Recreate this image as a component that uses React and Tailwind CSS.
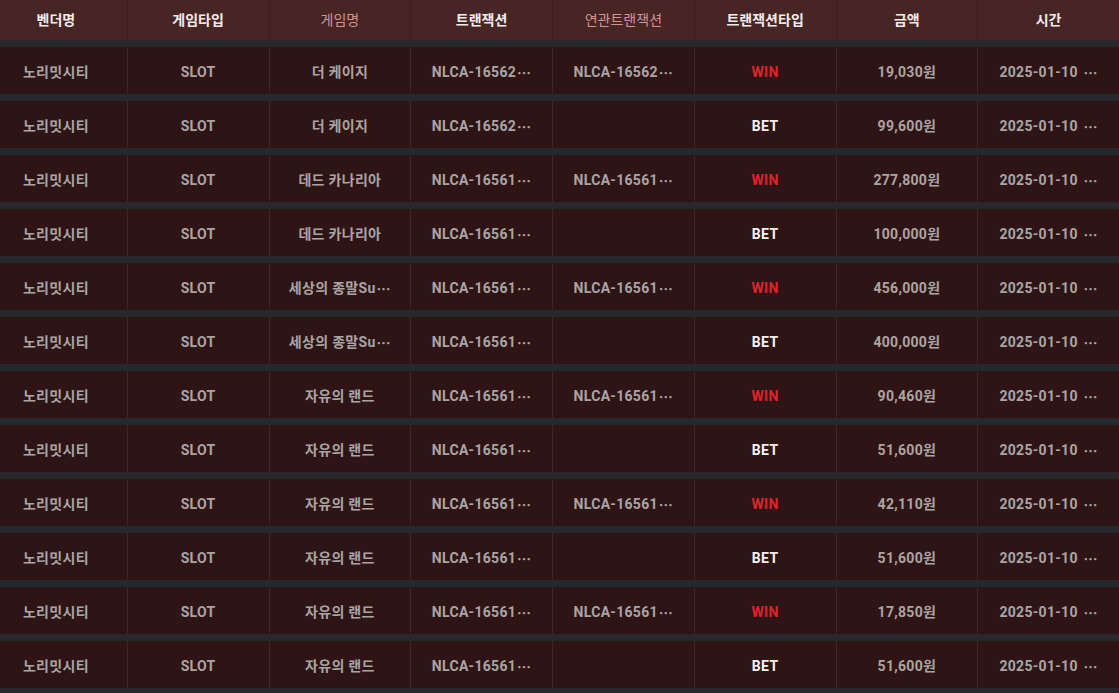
import React from 'react';

const headers = [
  { label: '벤더명' },
  { label: '게임타입' },
  { label: '게임명', muted: true },
  { label: '트랜잭션' },
  { label: '연관트랜잭션', muted: true },
  { label: '트랜잭션타입' },
  { label: '금액' },
  { label: '시간' },
];

const rows = [
  ['더 케이지', 'NLCA-16562…', 'NLCA-16562…', 'WIN', '19,030원'],
  ['더 케이지', 'NLCA-16562…', '', 'BET', '99,600원'],
  ['데드 카나리아', 'NLCA-16561…', 'NLCA-16561…', 'WIN', '277,800원'],
  ['데드 카나리아', 'NLCA-16561…', '', 'BET', '100,000원'],
  ['세상의 종말Su…', 'NLCA-16561…', 'NLCA-16561…', 'WIN', '456,000원'],
  ['세상의 종말Su…', 'NLCA-16561…', '', 'BET', '400,000원'],
  ['자유의 랜드', 'NLCA-16561…', 'NLCA-16561…', 'WIN', '90,460원'],
  ['자유의 랜드', 'NLCA-16561…', '', 'BET', '51,600원'],
  ['자유의 랜드', 'NLCA-16561…', 'NLCA-16561…', 'WIN', '42,110원'],
  ['자유의 랜드', 'NLCA-16561…', '', 'BET', '51,600원'],
  ['자유의 랜드', 'NLCA-16561…', 'NLCA-16561…', 'WIN', '17,850원'],
  ['자유의 랜드', 'NLCA-16561…', '', 'BET', '51,600원'],
];

const font = { fontFamily: 'Roboto, "Noto Sans CJK KR", sans-serif' };

// truncated values end in a centred CJK ellipsis, like the source table
const Clip = ({ text }) => {
  if (!text.endsWith('…')) return text;
  return (
    <>
      {text.slice(0, -1)}
      <span className="font-['Noto_Sans_CJK_KR'] leading-none ml-[1px]">…</span>
    </>
  );
};

const Cell = ({ children, first, className = '' }) => (
  <div
    className={`flex items-center justify-center pt-[3px] text-[14px] font-bold tracking-[0.3px] whitespace-nowrap overflow-hidden ${
      first ? '' : 'border-l border-[#40262a]'
    } ${className}`}
  >
    {children}
  </div>
);

export default function App() {
  return (
    <div className="w-[1119px] h-[693px] overflow-hidden bg-[#25292d]" style={font}>
      <div className="w-[1134px] -ml-[15px] flex flex-col gap-[7px]">
        {/* Header */}
        <div className="grid grid-cols-8 h-[40px] bg-[#482525]">
          {headers.map((h, i) => (
            <div
              key={h.label}
              className={`flex items-center justify-center text-[14px] ${
                i === 0 ? '' : 'border-l border-[#3a1e1e]'
              } ${h.muted ? 'text-[#d3938f] font-normal' : 'text-[#f0ecec] font-bold'}`}
            >
              {h.label}
            </div>
          ))}
        </div>

        {/* Rows */}
        {rows.map((r, i) => (
          <div key={i} className="grid grid-cols-8 h-[47px] bg-[#2f1415] text-[#a9a5a5]">
            <Cell first>노리밋시티</Cell>
            <Cell>SLOT</Cell>
            <Cell><Clip text={r[0]} /></Cell>
            <Cell><Clip text={r[1]} /></Cell>
            <Cell><Clip text={r[2]} /></Cell>
            <Cell className={r[3] === 'WIN' ? 'text-[#e0232b]' : 'text-[#f4f1f1]'}>{r[3]}</Cell>
            <Cell>{r[4]}</Cell>
            <Cell>
              {'2025-01-10\u00a0'}
              <span className="font-['Noto_Sans_CJK_KR'] leading-none ml-[2px]">…</span>
            </Cell>
          </div>
        ))}
      </div>
    </div>
  );
}
